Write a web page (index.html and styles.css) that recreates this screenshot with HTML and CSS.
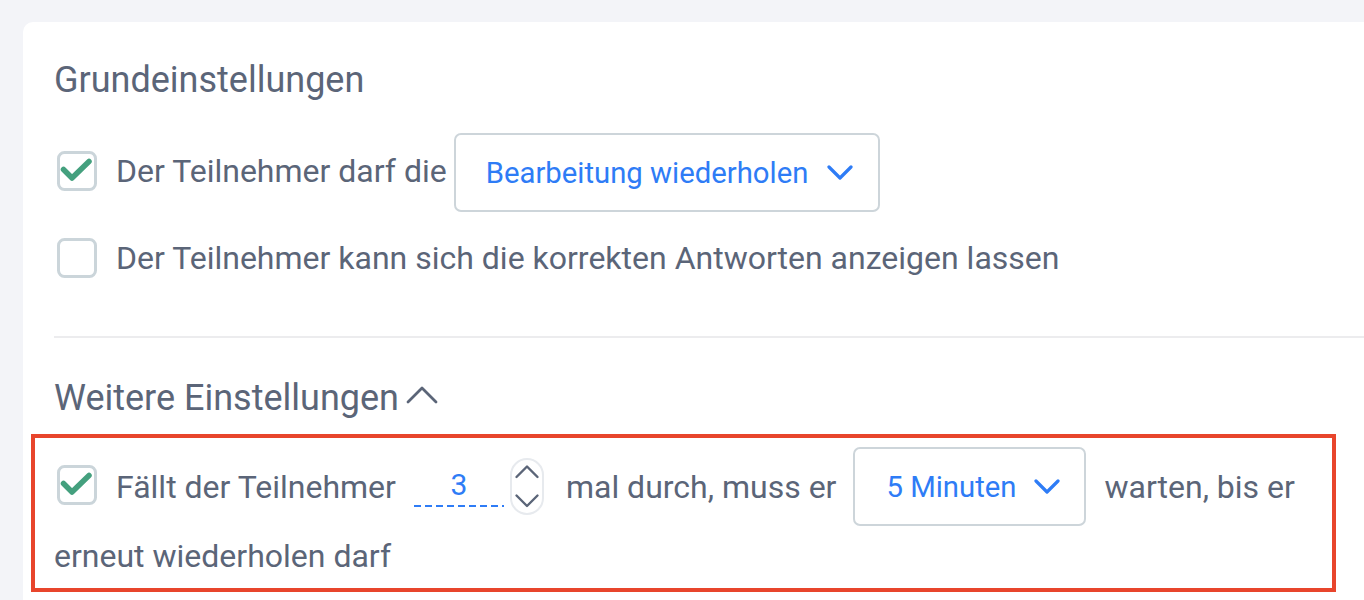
FILE: index.html
```html
<!DOCTYPE html>
<html lang="de">
<head>
<meta charset="utf-8">
<title>Einstellungen</title>
<link rel="stylesheet" href="styles.css">
</head>
<body>
<div class="card">
  <div class="section">
    <h2 class="title">Grundeinstellungen</h2>
    <div class="opt-row row-select">
      <svg class="cb" width="40" height="40" viewBox="0 0 40 40"><rect x="1.5" y="1.5" width="37" height="37" rx="6" fill="none" stroke="#cbd5da" stroke-width="3"/><polyline points="6.5,18.5 15,27 32,10.5" fill="none" stroke="#44a07e" stroke-width="5.5" stroke-linecap="round" stroke-linejoin="round"/></svg>
      <span class="label">Der Teilnehmer darf die</span>
      <div class="select sel-wide"><span>Bearbeitung wiederholen</span><svg class="chev" width="26" height="15" viewBox="0 0 26 15"><polyline points="2,2 13,13 24,2" fill="none" stroke="#2e7cf6" stroke-width="3.2" stroke-linecap="round" stroke-linejoin="round"/></svg></div>
    </div>
    <div class="opt-row row-plain">
      <svg class="cb" width="40" height="40" viewBox="0 0 40 40"><rect x="1.5" y="1.5" width="37" height="37" rx="6" fill="none" stroke="#cbd5da" stroke-width="3"/></svg>
      <span class="label">Der Teilnehmer kann sich die korrekten Antworten anzeigen lassen</span>
    </div>
    <div class="divider"></div>
    <h2 class="title title-toggle">Weitere Einstellungen<svg class="up" width="32" height="18" viewBox="0 0 32 18"><polyline points="2,16 16,2 30,16" fill="none" stroke="#5b6578" stroke-width="2.8" stroke-linecap="round" stroke-linejoin="round"/></svg></h2>
  </div>
  <div class="highlight"><svg class="cb cb-inline" width="40" height="40" viewBox="0 0 40 40"><rect x="1.5" y="1.5" width="37" height="37" rx="6" fill="none" stroke="#cbd5da" stroke-width="3"/><polyline points="6.5,18.5 15,27 32,10.5" fill="none" stroke="#44a07e" stroke-width="5.5" stroke-linecap="round" stroke-linejoin="round"/></svg><span class="t t-first">Fällt der Teilnehmer</span><span class="num">3</span><svg class="spin" width="34" height="57" viewBox="0 0 34 57"><rect x="1" y="1" width="32" height="55" rx="16" fill="#fff" stroke="#e7eaee" stroke-width="2"/><polyline points="6.5,19 17,8.5 27.5,19" fill="none" stroke="#5b6578" stroke-width="2.4" stroke-linecap="round" stroke-linejoin="round"/><polyline points="6.5,37.5 17,48 27.5,37.5" fill="none" stroke="#5b6578" stroke-width="2.4" stroke-linecap="round" stroke-linejoin="round"/></svg><span class="t t-mid">mal durch, muss er</span><span class="select sel-inline"><span>5 Minuten</span><svg class="chev" width="26" height="15" viewBox="0 0 26 15"><polyline points="2,2 13,13 24,2" fill="none" stroke="#2e7cf6" stroke-width="3.2" stroke-linecap="round" stroke-linejoin="round"/></svg></span><span class="t t-after">warten, bis er erneut wiederholen darf</span></div>
</div>
</body>
</html>
```
FILE: styles.css
```css
html, body {
  margin: 0;
  padding: 0;
}
body {
  background: #f3f4f8;
  font-family: Roboto, "Liberation Sans", Arial, sans-serif;
  color: #5b6578;
  overflow: hidden;
}
.card {
  margin: 22px 0 0 23px;
  background: #ffffff;
  border-radius: 10px 0 0 0;
  padding: 38px 0 40px 8px;
  min-height: 600px;
  box-sizing: border-box;
}
.section {
  padding-left: 23px;
}
.title {
  margin: 0;
  font-size: 36px;
  line-height: 40px;
  font-weight: 400;
  color: #5b6578;
}
.title-toggle {
  display: flex;
  align-items: center;
  margin-top: 40px;
}
.up {
  margin-left: 7px;
  margin-top: -6px;
}
.opt-row {
  display: flex;
  align-items: center;
  font-size: 32px;
}
.row-select {
  margin-top: 33px;
  height: 79px;
}
.row-select .cb {
  margin-top: -3px;
}
.row-select .label {
  margin-top: -3px;
  margin-right: 7px;
}
.row-plain {
  margin-top: 26px;
  height: 40px;
}
.cb {
  flex: none;
  margin-left: 3px;
  margin-right: 19px;
}
.label {
  white-space: nowrap;
}
.select {
  display: inline-flex;
  align-items: center;
  box-sizing: border-box;
  height: 79px;
  border: 2px solid #cdd5da;
  border-radius: 7px;
  color: #2e7cf6;
  font-size: 29.3px;
  background: #fff;
}
.sel-wide {
  flex: none;
  width: 426px;
  padding-left: 30px;
}
.sel-wide .chev {
  margin-left: 19px;
}
.divider {
  height: 2px;
  background: #ececee;
  margin-top: 58px;
}
.highlight {
  margin: 16px 28px 0 0;
  border: 4px solid #e8452c;
  padding: 9px 10px 5px 19px;
  font-size: 32px;
  line-height: 54px;
}
.cb-inline {
  vertical-align: middle;
  margin-top: -4px;
}
.t {
  vertical-align: middle;
}
.num {
  display: inline-block;
  vertical-align: middle;
  box-sizing: border-box;
  width: 90px;
  height: 40px;
  line-height: 36px;
  margin-left: 18px;
  text-align: center;
  font-size: 30px;
  color: #2e7cf6;
  background-image: linear-gradient(to right, #2e7cf6 7px, transparent 7px);
  background-size: 11px 2px;
  background-repeat: repeat-x;
  background-position: left bottom;
}
.spin {
  vertical-align: middle;
  margin-left: 6px;
}
.t-mid {
  margin-left: 22px;
}
.sel-inline {
  vertical-align: middle;
  width: 233px;
  padding-left: 31px;
  margin-left: 17px;
  line-height: normal;
}
.sel-inline .chev {
  margin-left: 17px;
}
.t-after {
  margin-left: 18px;
}
```
